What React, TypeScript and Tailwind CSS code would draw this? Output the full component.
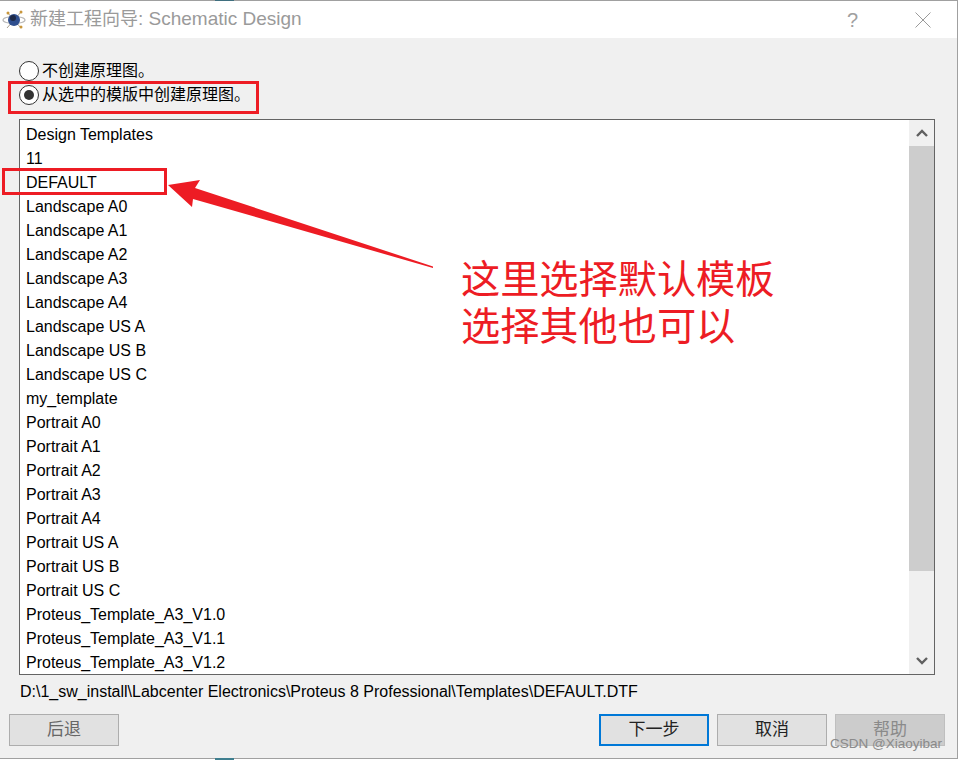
const templates = [
  'Design Templates', '11', 'DEFAULT', 'Landscape A0', 'Landscape A1', 'Landscape A2', 'Landscape A3',
  'Landscape A4', 'Landscape US A', 'Landscape US B', 'Landscape US C', 'my_template', 'Portrait A0',
  'Portrait A1', 'Portrait A2', 'Portrait A3', 'Portrait A4', 'Portrait US A', 'Portrait US B',
  'Portrait US C', 'Proteus_Template_A3_V1.0', 'Proteus_Template_A3_V1.1', 'Proteus_Template_A3_V1.2',
];

function Radio({ checked, label }: { checked?: boolean; label: string }) {
  return (
    <div className="flex h-6 items-center">
      <span className="flex h-[20px] w-[20px] items-center justify-center rounded-full border border-[#333] bg-white">
        {checked && <span className="h-[10px] w-[10px] rounded-full bg-[#333]" />}
      </span>
      <span className="ml-[3px] text-[16px] text-black">{label}</span>
    </div>
  );
}

function Button({ label, kind }: { label: string; kind?: 'primary' | 'disabled' | 'muted' }) {
  const look =
    kind === 'primary'
      ? 'border-2 border-[#0078d7] bg-[#e1e1e1] text-[#222]'
      : kind === 'disabled'
        ? 'border border-[#bfbfbf] bg-[#cccccc] text-[#8a8a8a]'
        : kind === 'muted'
          ? 'border border-[#adadad] bg-[#e1e1e1] text-[#666]'
          : 'border border-[#adadad] bg-[#e1e1e1] text-[#222]';
  return <div className={`flex h-8 w-[110px] items-center justify-center text-[17px] ${look}`}>{label}</div>;
}

function Chevron({ up }: { up?: boolean }) {
  return (
    <svg width="14" height="10" viewBox="0 0 14 10">
      <path d={up ? 'M2 8 L7 3 L12 8' : 'M2 2 L7 7 L12 2'} fill="none" stroke="#606060" strokeWidth="2.4" />
    </svg>
  );
}

function ProteusLogo() {
  return (
    <svg width="24" height="24" viewBox="0 0 24 24">
      <ellipse cx="12" cy="12" rx="11" ry="3.5" fill="none" stroke="#b8b8b8" strokeWidth="1.2" />
      <path d="M5 4 L19 20 M19 4 L5 20" stroke="#a8a090" strokeWidth="1" />
      <circle cx="12" cy="12" r="6" fill="#2f4f8f" />
      <circle cx="11" cy="10" r="3" fill="#1e2a48" />
      <circle cx="6" cy="5" r="1.5" fill="#c8963c" />
      <circle cx="19" cy="4" r="1.5" fill="#c8963c" />
      <circle cx="19" cy="19" r="1.5" fill="#c8963c" />
    </svg>
  );
}

export default function App() {
  return (
    <div className="relative h-[760px] w-[958px] overflow-hidden bg-white font-['Liberation_Sans','Noto_Sans_CJK_SC',sans-serif]">
      <div className="flex h-[759px] flex-col border-t border-r border-b border-[#a0a0a0] bg-[#f0f0f0]">
        <div className="flex h-[37px] shrink-0 items-center bg-white pl-[2px]">
          <ProteusLogo />
          <span className="ml-[4px] text-[19px] text-[#9a9a9a]">
            <span className="text-[18px]">新建工程向导</span>: Schematic Design
          </span>
          <span className="ml-auto mr-[57px] text-[20px] text-[#a0a0a0]">?</span>
          <svg className="mr-[26px]" width="16" height="16" viewBox="0 0 16 16">
            <path d="M0.5 0.5 L15.5 15.5 M15.5 0.5 L0.5 15.5" stroke="#9a9a9a" strokeWidth="1" />
          </svg>
        </div>

        <div className="flex min-h-0 flex-1 flex-col pl-[19px] pr-[22px]">
          <div className="mt-[21px] flex flex-col">
            <Radio label="不创建原理图。" />
            <Radio checked label="从选中的模版中创建原理图。" />
          </div>

          <div className="mt-[12px] flex h-[556px] shrink-0 border border-[#646464] bg-white">
            <ul className="min-w-0 flex-1 overflow-hidden pl-[6px] pt-[3px]">
              {templates.map((t) => (
                <li key={t} className="flex h-6 items-center text-[16px] text-black">
                  {t}
                </li>
              ))}
            </ul>
            <div className="flex w-[25px] shrink-0 flex-col bg-[#f0f0f0]">
              <div className="flex h-[26px] items-center justify-center">
                <Chevron up />
              </div>
              <div className="h-[425px] bg-[#cdcdcd]" />
              <div className="flex-1" />
              <div className="flex h-[26px] items-center justify-center">
                <Chevron />
              </div>
            </div>
          </div>

          <div className="ml-px mt-[5px] text-[16px] leading-[24px] text-black">
            {'D:\\1_sw_install\\Labcenter Electronics\\Proteus 8 Professional\\Templates\\DEFAULT.DTF'}
          </div>

          <div className="-ml-[10px] -mr-[10px] mt-[10px] flex">
            <Button label="后退" kind="muted" />
            <div className="ml-auto flex gap-2">
              <Button label="下一步" kind="primary" />
              <Button label="取消" />
              <Button label="帮助" kind="disabled" />
            </div>
          </div>
        </div>
      </div>

      {/* bits of the window behind the dialog */}
      <div className="absolute left-[215px] top-0 h-px w-[19px] bg-[#3f6f7f]" />
      <div className="absolute left-[215px] top-[758px] h-[2px] w-[19px] bg-[#3f7f8f]" />
      <div className="absolute left-[246px] top-[759px] text-[18px] leading-[18px] whitespace-nowrap text-[#1f3a50]">
        Proteus Professional 8.11 SP1 Pro
      </div>

      {/* red markup drawn over the dialog */}
      <div className="absolute left-[8px] top-[81px] h-[33px] w-[251px] border-[3px] border-[#ed1c24]" />
      <div className="absolute left-[2px] top-[168px] h-[27px] w-[165px] border-[3px] border-[#ed1c24]" />
      <svg className="absolute left-[160px] top-[170px]" width="285" height="110" viewBox="0 0 285 110">
        <path d="M8 15 L40 10 L35 18 L273 96.5 L273 98 L33 29 L32 37 Z" fill="#ed1c24" />
      </svg>
      <div className="absolute left-[461px] top-[256px] text-[39.2px] leading-[47px] text-[#ed1c24]">
        这里选择默认模板
        <br />
        选择其他也可以
      </div>
      <div className="absolute left-[830px] top-[734px] text-[13.5px] text-[#8a8a8a]">CSDN @Xiaoyibar</div>
    </div>
  );
}
